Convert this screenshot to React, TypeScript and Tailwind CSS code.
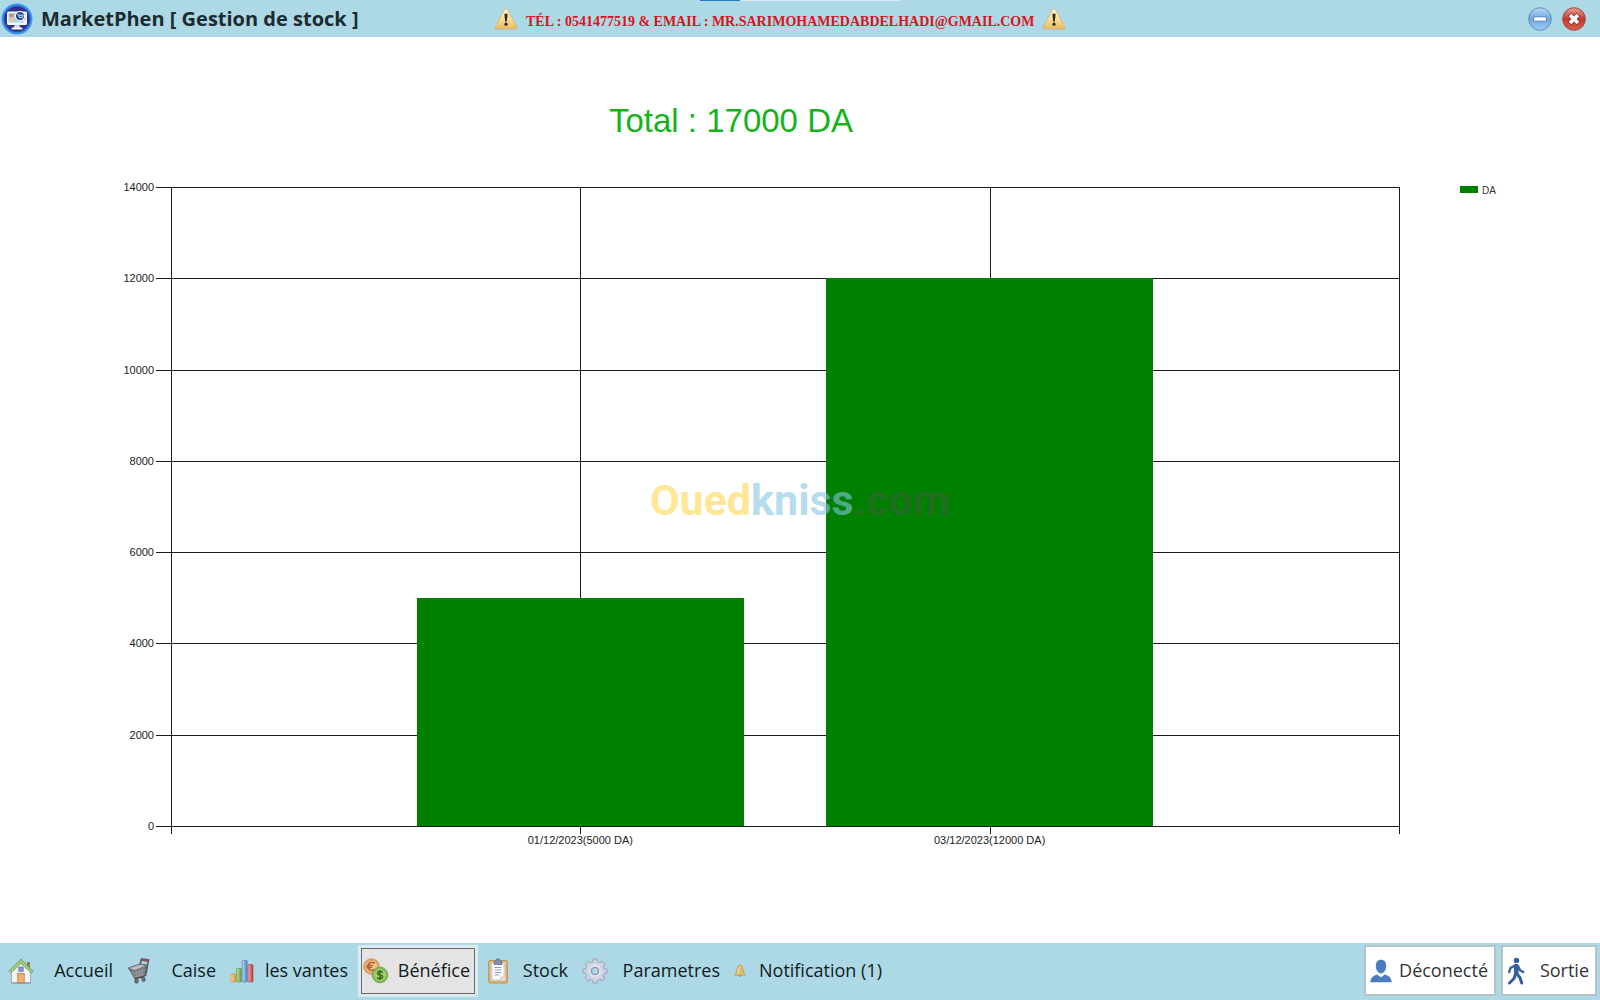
import type { ReactNode } from 'react'

const sales = [
  { date: '01/12/2023', value: 5000 },
  { date: '03/12/2023', value: 12000 },
]

const WarningIcon = () => (
  <svg width="24" height="22" viewBox="0 0 24 22" className="shrink-0">
    <defs>
      <linearGradient id="warn" x1="0" y1="0" x2="0" y2="1">
        <stop offset="0" stopColor="#fdf3c8" />
        <stop offset="0.6" stopColor="#f7d98a" />
        <stop offset="1" stopColor="#eabb5c" />
      </linearGradient>
    </defs>
    <path d="M10.4 1.6Q12 -.4 13.6 1.6L23 19Q23.6 21 21.6 21H2.4Q.4 21 1 19Z" fill="url(#warn)" stroke="#cdb27a" strokeWidth="0.8" />
    <path d="M10.4 6.2Q12 4.8 13.6 6.2L12.8 13.4H11.2Z" fill="#2b2a26" />
    <circle cx="12" cy="16.2" r="1.6" fill="#2b2a26" />
  </svg>
)

const LogoIcon = () => (
  <svg width="32" height="32" viewBox="0 0 32 32" className="shrink-0">
    <circle cx="16" cy="16" r="15.5" fill="#3b9af2" />
    <circle cx="16" cy="16" r="13.8" fill="#2a6bd0" />
    <circle cx="16" cy="16" r="12.6" fill="#33308c" />
    <rect x="6" y="8.5" width="20" height="13.5" rx="1.5" fill="#f2f7fc" />
    <rect x="7.5" y="10" width="17" height="9.5" fill="#a9d4f2" />
    <rect x="8.5" y="11" width="4" height="3" fill="#e87b6c" />
    <rect x="8.5" y="15" width="4" height="3" fill="#f4c95d" />
    <circle cx="19" cy="13" r="4.6" fill="#2a4f91" stroke="#fff" strokeWidth="1" />
    <path d="M16.6 11.4h1l.8 3h3l.8-2.2h-4.2" fill="none" stroke="#fff" strokeWidth="0.8" />
    <path d="M22 16.5l3 3.5" stroke="#fff" strokeWidth="1.4" />
    <path d="M13.600 22h4.800l.8 3h-6.400z" fill="#c6dcee" />
    <rect x="10.500" y="24.500" width="11" height="2" rx="1" fill="#fff" />
  </svg>
)

const MinimizeIcon = () => (
  <svg width="24" height="24" viewBox="0 0 24 24">
    <defs>
      <linearGradient id="min" x1="0" y1="0" x2="0" y2="1">
        <stop offset="0" stopColor="#b9d8f3" />
        <stop offset="0.5" stopColor="#6fa8dc" />
        <stop offset="1" stopColor="#9fd0f5" />
      </linearGradient>
    </defs>
    <circle cx="12" cy="12" r="11.3" fill="url(#min)" stroke="#5f8cbd" strokeWidth="1" />
    <rect x="5.500" y="9.800" width="13" height="4.400" rx="1" fill="#fff" stroke="#4a78ad" strokeWidth="0.9" />
  </svg>
)

const CloseIcon = () => (
  <svg width="24" height="24" viewBox="0 0 24 24">
    <defs>
      <linearGradient id="close" x1="0" y1="0" x2="0" y2="1">
        <stop offset="0" stopColor="#eaa296" />
        <stop offset="0.5" stopColor="#c23a2c" />
        <stop offset="1" stopColor="#d9604c" />
      </linearGradient>
    </defs>
    <circle cx="12" cy="12" r="11.3" fill="url(#close)" stroke="#a5453b" strokeWidth="1" />
    <path d="M7.500 7.500l9 9M16.500 7.500l-9 9" stroke="#8e2319" strokeWidth="5.200" />
    <path d="M8 8l8 8M16 8l-8 8" stroke="#fff" strokeWidth="3.800" />
  </svg>
)

const HomeIcon = () => (
  <svg width="26" height="26" viewBox="0 0 26 26" className="shrink-0">
    <rect x="19" y="4" width="3" height="7" fill="#8f7a62" />
    <path d="M3.500 12L13 3.500l9.500 8.500v13h-19z" fill="#f4f3f6" stroke="#9a9aa5" strokeWidth="0.8" />
    <path d="M.8 13.200L13 1l12.200 12.200-1.900 1.900L13 5.400 2.700 15.100z" fill="#9ccb7c" stroke="#6a9650" strokeWidth="0.7" />
    <rect x="10.8" y="9" width="4.4" height="4.4" fill="#8795de" stroke="#6470b0" strokeWidth="0.7" />
    <rect x="9.800" y="15.500" width="6.400" height="9.500" fill="#f0b470" stroke="#b9763b" strokeWidth="0.8" />
    <path d="M3.500 25h19" stroke="#8d8d96" />
  </svg>
)

const CartIcon = () => (
  <svg width="24" height="26" viewBox="0 0 24 26" className="shrink-0">
    <path d="M1.500 10l12-4 6 1-2 11-10 2.500z" fill="#77797d" stroke="#55575b" strokeWidth="0.9" />
    <path d="M1.500 10l6 2.500L19.500 8l-6-2z" fill="#b9bbbe" stroke="#66686c" strokeWidth="0.7" />
    <path d="M9 12.500l.6 7M12 11.500l.4 7.500M15 10.500v8M3 13.500l5 2.500 10.500-4M4.500 16.500l3.500 2.500 10-3.500" fill="none" stroke="#a9abae" strokeWidth="0.7" />
    <path d="M13 6.500L14.500 1l7 1L18.500 18" fill="none" stroke="#5a5c60" strokeWidth="1.6" />
    <path d="M14.500 2l6.500 1" stroke="#8a5551" strokeWidth="1.800" />
    <path d="M8 20.500l9.500-2" stroke="#4a4c50" strokeWidth="1.300" />
    <ellipse cx="9.500" cy="23" rx="1.700" ry="2.200" fill="#77797d" stroke="#4d4f53" />
    <ellipse cx="16.500" cy="21.500" rx="1.600" ry="2.100" fill="#77797d" stroke="#4d4f53" />
  </svg>
)

const SalesIcon = () => (
  <svg width="24" height="24" viewBox="0 0 24 24" className="shrink-0">
    <defs>
      <linearGradient id="orange"><stop stopColor="#fbd9a8" /><stop offset="1" stopColor="#e0933e" /></linearGradient>
      <linearGradient id="lime"><stop stopColor="#bfe39b" /><stop offset="1" stopColor="#5d9e3b" /></linearGradient>
      <linearGradient id="blue"><stop stopColor="#b9d9f8" /><stop offset="1" stopColor="#4a84c8" /></linearGradient>
      <linearGradient id="red"><stop stopColor="#f5b0a6" /><stop offset="1" stopColor="#b93a37" /></linearGradient>
    </defs>
    <rect x="0.8" y="15" width="5" height="8" rx="0.8" fill="url(#orange)" stroke="#c98440" strokeWidth="0.6" />
    <rect x="6.5" y="9.500" width="5" height="13.500" rx="0.8" fill="url(#lime)" stroke="#5b9041" strokeWidth="0.6" />
    <rect x="12.2" y="1.5" width="5" height="21.5" rx="0.8" fill="url(#blue)" stroke="#4c79ad" strokeWidth="0.6" />
    <rect x="18" y="5.500" width="5" height="17.500" rx="0.8" fill="url(#red)" stroke="#a64545" strokeWidth="0.6" />
  </svg>
)

const CoinsIcon = () => (
  <svg width="26" height="26" viewBox="0 0 26 26" className="shrink-0">
    <circle cx="8.5" cy="8.5" r="7.8" fill="#e3a266" stroke="#cf8a4c" strokeWidth="0.8" />
    <circle cx="8.5" cy="8.5" r="5.8" fill="#f1c08c" />
    <path d="M11.500 5.600A4 4 0 1 0 11.500 11.400M3.600 7.600h6M3.600 9.600h5.400" fill="none" stroke="#a5622a" strokeWidth="1.5" />
    <circle cx="17" cy="17" r="7.8" fill="#86bd56" stroke="#659a3d" strokeWidth="0.8" />
    <circle cx="17" cy="17" r="5.8" fill="#a0d06c" />
    <path d="M19.8 14.6Q17 12.4 14.8 14.4 13.8 16.6 17 17T19.4 19.6Q17 21.6 14.2 19.6M17 12v10" fill="none" stroke="#3f7020" strokeWidth="1.6" />
  </svg>
)

const ClipboardIcon = () => (
  <svg width="20" height="26" viewBox="0 0 20 26" className="shrink-0">
    <rect x="0.7" y="2.5" width="18.6" height="22.5" rx="1.2" fill="#e2b468" stroke="#b98d4b" strokeWidth="0.9" />
    <rect x="2.800" y="4.200" width="14.400" height="18.500" fill="#dfe3ec" />
    <path d="M4 4.500h12v14l-3.500 3.500H4z" fill="#fff" stroke="#9fa8bd" strokeWidth="0.6" />
    <path d="M16 18.500h-3.500V22z" fill="#c5cbdb" />
    <path d="M6 4.5Q6 2.8 8 2.8 8 .8 10 .8T12 2.8Q14 2.8 14 4.5V6.5H6z" fill="#8290b8" stroke="#58658f" strokeWidth="0.7" />
    <path d="M6.5 9.5h7M6.5 12h7M6.5 14.5h7M6.5 17h5" stroke="#8d9cc6" />
  </svg>
)

const teeth = [0, 45, 90, 135, 180, 225, 270, 315]

const GearIcon = () => (
  <svg width="26" height="26" viewBox="0 0 26 26" className="shrink-0">
    {teeth.map((angle) => (
      <path key={angle} d="M9.800 5.500L11.200 .8h3.600l1.400 4.700z" fill="#c9cfde" stroke="#8f98af" strokeWidth="0.8" transform={`rotate(${angle} 13 13)`} />
    ))}
    <circle cx="13" cy="13" r="9" fill="#cfd5e3" />
    <circle cx="13" cy="13" r="6.500" fill="#dde1ea" />
    <circle cx="13" cy="13" r="3.500" fill="#add8e6" stroke="#8790a9" strokeWidth="1.200" />
  </svg>
)

const BellIcon = () => (
  <svg width="12" height="14" viewBox="0 0 12 14" className="shrink-0">
    <path d="M6 .8Q8.8 1.2 9 5.5 9.2 9 11.2 11.2H.8Q2.8 9 3 5.5 3.2 1.2 6 .8z" fill="#e3bd6b" stroke="#b99550" strokeWidth="0.7" />
    <path d="M5 3Q4.2 6 4 10" fill="none" stroke="#fae9ae" />
    <path d="M4.5 11.4Q6 14 7.5 11.4z" fill="#a3742a" />
  </svg>
)

const UserIcon = () => (
  <svg width="22" height="24" viewBox="0 0 22 24" className="shrink-0">
    <path d="M11 .8C14.6.8 16.2 3.4 16.2 7S14 14.500 11 14.500 5.8 10.6 5.8 7 7.4.8 11 .8z" fill="#4a7dbb" />
    <path d="M.4 23.200Q.4 17.200 7 15.400L11 18.200l4-2.800q6.600 1.800 6.600 7.800z" fill="#4a7dbb" />
  </svg>
)

const WalkIcon = () => (
  <svg width="18" height="28" viewBox="0 0 18 28" className="shrink-0">
    <circle cx="9.500" cy="3.400" r="2.700" fill="#35609f" />
    <path d="M9.300 9v7.500" stroke="#35609f" strokeWidth="4.600" strokeLinecap="round" />
    <path d="M8 8.500L3.500 11 2.200 15M11 9l2 4.200 3.300 1.800" fill="none" stroke="#35609f" strokeWidth="2.400" strokeLinecap="round" strokeLinejoin="round" />
    <path d="M8.500 17L7 21.500 2.500 26M10 17l3 3.800 1.700 5.200" fill="none" stroke="#35609f" strokeWidth="3" strokeLinecap="round" strokeLinejoin="round" />
  </svg>
)

type NavButtonProps = { icon: ReactNode; label: string; className: string }

const NavButton = ({ icon, label, className }: NavButtonProps) => (
  <button className={`flex h-[46px] items-center justify-between px-1 whitespace-nowrap ${className}`}>
    {icon}
    <span>{label}</span>
  </button>
)

// Plot area, in viewBox units
const LEFT = 171
const RIGHT = 1399
const TOP = 27
const BOTTOM = 666
const MAX = 14000

const yOf = (value: number) => Math.round(BOTTOM - (value / MAX) * (BOTTOM - TOP))
const step = (RIGHT - LEFT) / (sales.length + 1)

const Chart = () => (
  <svg viewBox="0 0 1600 700" className="w-full font-['Liberation_Sans',sans-serif]" role="img" aria-label="Bénéfice">
    <g stroke="#1a1a1a" strokeWidth="1" shapeRendering="crispEdges">
      {[0, 1, 2, 3].map((i) => {
        const x = Math.round(LEFT + i * step) + 0.5
        return <line key={i} x1={x} x2={x} y1={TOP} y2={BOTTOM + 8} />
      })}
      {[0, 2000, 4000, 6000, 8000, 10000, 12000, 14000].map((v) => (
        <line key={v} x1={LEFT - 15} x2={RIGHT} y1={yOf(v) + 0.5} y2={yOf(v) + 0.5} />
      ))}
    </g>
    {[0, 2000, 4000, 6000, 8000, 10000, 12000, 14000].map((v) => (
      <text key={v} x={LEFT - 17} y={yOf(v) + 4} textAnchor="end" fill="#222" className="text-[11px]">{v}</text>
    ))}
    {sales.map(({ date, value }, i) => {
      const center = LEFT + (i + 1) * step
      return (
        <g key={date}>
          <rect x={Math.round(center - step * 0.4)} y={yOf(value)} width={Math.round(step * 0.8)} height={BOTTOM - yOf(value)} fill="#008000" />
          <text x={center} y={BOTTOM + 18} textAnchor="middle" fill="#222" className="text-[11px]">{`${date}(${value} DA)`}</text>
        </g>
      )
    })}
    <rect x="1460" y="26" width="18" height="7" fill="#008000" />
    <text x="1482" y="34" fill="#333" className="text-[10px]">DA</text>
  </svg>
)

const App = () => {
  return (
    <div className="flex min-h-screen flex-col bg-white font-['Open_Sans','Noto_Sans',sans-serif]">
      <header className="relative flex h-[37px] items-center bg-[#add8e6]">
        <div className="absolute top-0 left-[700px] flex h-px w-[201px] bg-[#dceaf5]">
          <div className="w-10 bg-[#2b78c2]"></div>
        </div>
        <div className="flex w-[494px] shrink-0 items-center gap-2 pl-px">
          <LogoIcon />
          <h1 className="text-[20px] font-bold whitespace-nowrap text-[#1c2b30]">MarketPhen [ Gestion de stock ]</h1>
        </div>
        <div className="flex items-center gap-2">
          <WarningIcon />
          <p className="pt-[6px] font-['Liberation_Serif',serif] text-[14px] font-bold whitespace-nowrap text-[#d8141c]">
            TÉL : 0541477519 &amp; EMAIL : MR.SARIMOHAMEDABDELHADI@GMAIL.COM
          </p>
          <WarningIcon />
        </div>
        <div className="ml-auto flex gap-[10px] pt-px pr-[14px]">
          <button aria-label="Réduire"><MinimizeIcon /></button>
          <button aria-label="Fermer"><CloseIcon /></button>
        </div>
      </header>

      <main className="relative flex-1">
        <h2 className="h-[123px] pt-[60px] pr-[138px] text-center font-['Liberation_Sans',sans-serif] text-[33px] leading-[48px] text-[#12b41a]">
          Total : 17000 DA
        </h2>
        <Chart />
        {/* Watermark */}
        <div className="pointer-events-none absolute inset-0 flex items-center justify-center pt-5">
          <p className="font-['Roboto',sans-serif] text-[43px] leading-none font-bold">
            <span className="text-[#ffd74e]/60">Oued</span>
            <span className="text-[#83c6e3]/60">kniss</span>
            <span className="text-[#555555]/40">.com</span>
          </p>
        </div>
      </main>

      <footer className="flex h-[57px] items-center justify-between bg-[#add8e6] pb-[2px] text-[18px] text-[#101c20]">
        <nav className="flex items-center gap-[6px] pl-1">
          <NavButton icon={<HomeIcon />} label="Accueil" className="w-[113px]" />
          <NavButton icon={<CartIcon />} label="Caise" className="w-[97px]" />
          <NavButton icon={<SalesIcon />} label="les vantes" className="w-[126px]" />
          <div className="bg-[#dcebf0] p-[3px]">
            <NavButton icon={<CoinsIcon />} label="Bénéfice" className="w-[114px] border border-[#6b6b6b] bg-[#e4e4e4] pl-px" />
          </div>
          <NavButton icon={<ClipboardIcon />} label="Stock" className="w-[88px]" />
          <NavButton icon={<GearIcon />} label="Parametres" className="w-[146px]" />
          <NavButton icon={<BellIcon />} label="Notification (1)" className="w-[156px]" />
        </nav>
        <div className="flex gap-[5px] pr-[3px]">
          <button className="flex h-[51px] w-[132px] items-center justify-between border-2 border-[#b5c3c9] bg-white pr-[6px] pl-1 text-[#333]">
            <UserIcon />
            <span>Déconecté</span>
          </button>
          <button className="flex h-[51px] w-[96px] items-center justify-between border-2 border-[#b5c3c9] bg-white pr-[6px] pl-1 text-[#333]">
            <WalkIcon />
            <span>Sortie</span>
          </button>
        </div>
      </footer>
    </div>
  )
}

export default App
